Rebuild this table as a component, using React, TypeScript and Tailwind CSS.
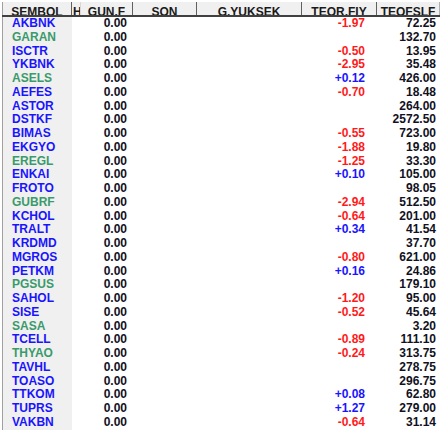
import React from "react";

type Row = { s: string; g?: boolean; f?: string; t: string };

const rows: Row[] = [
  { s: "AKBNK", f: "-1.97", t: "72.25" },
  { s: "GARAN", g: true, t: "132.70" },
  { s: "ISCTR", f: "-0.50", t: "13.95" },
  { s: "YKBNK", f: "-2.95", t: "35.48" },
  { s: "ASELS", g: true, f: "+0.12", t: "426.00" },
  { s: "AEFES", f: "-0.70", t: "18.48" },
  { s: "ASTOR", t: "264.00" },
  { s: "DSTKF", t: "2572.50" },
  { s: "BIMAS", f: "-0.55", t: "723.00" },
  { s: "EKGYO", f: "-1.88", t: "19.80" },
  { s: "EREGL", g: true, f: "-1.25", t: "33.30" },
  { s: "ENKAI", f: "+0.10", t: "105.00" },
  { s: "FROTO", t: "98.05" },
  { s: "GUBRF", g: true, f: "-2.94", t: "512.50" },
  { s: "KCHOL", f: "-0.64", t: "201.00" },
  { s: "TRALT", f: "+0.34", t: "41.54" },
  { s: "KRDMD", t: "37.70" },
  { s: "MGROS", f: "-0.80", t: "621.00" },
  { s: "PETKM", f: "+0.16", t: "24.86" },
  { s: "PGSUS", g: true, t: "179.10" },
  { s: "SAHOL", f: "-1.20", t: "95.00" },
  { s: "SISE", f: "-0.52", t: "45.64" },
  { s: "SASA", g: true, t: "3.20" },
  { s: "TCELL", f: "-0.89", t: "111.10" },
  { s: "THYAO", g: true, f: "-0.24", t: "313.75" },
  { s: "TAVHL", t: "278.75" },
  { s: "TOASO", t: "296.75" },
  { s: "TTKOM", f: "+0.08", t: "62.80" },
  { s: "TUPRS", f: "+1.27", t: "279.00" },
  { s: "VAKBN", f: "-0.64", t: "31.14" },
];

export default function App() {
  return (
    <div
      className="w-[442px] h-[431px] bg-white overflow-hidden text-[12px] font-bold"
      style={{ fontFamily: '"Liberation Sans", Arial, sans-serif' }}
    >
      {/* header */}
      <div className="mt-[2px] flex h-[13px] pl-[2px] text-[#1a1a1a]">
        <div className="w-[70px] border-l border-[#a0a0a0] border-r border-r-[#606060] bg-[#f0f0f0] overflow-hidden text-center leading-[12px] pt-[4px] whitespace-nowrap">
          SEMBOL
        </div>
        <div className="w-[9px] border-r border-[#d8d8d8] bg-[#f0f0f0] overflow-hidden leading-[12px] pt-[4px] pl-[1px] whitespace-nowrap">
          H
        </div>
        <div className="w-[52px] border-r border-[#606060] bg-[#f0f0f0] overflow-hidden text-center leading-[12px] pt-[4px]">
          GUN.F
        </div>
        <div className="w-[64px] border-r border-[#606060] bg-[#f0f0f0] overflow-hidden text-center leading-[12px] pt-[4px]">
          SON
        </div>
        <div className="w-[105px] border-r border-[#606060] bg-[#f0f0f0] overflow-hidden text-center leading-[12px] pt-[4px]">
          G.YUKSEK
        </div>
        <div className="w-[75px] border-r border-[#606060] bg-[#f0f0f0] overflow-hidden text-center leading-[12px] pt-[4px]">
          TEOR.FIY
        </div>
        <div className="w-[63px] border-r border-[#b0b0b0] bg-[#f0f0f0] overflow-hidden text-center leading-[12px] pt-[4px]">
          TEOFSLF
        </div>
      </div>
      <div className="ml-[2px] w-[438px] h-[2px] bg-[#404040]" />
      {/* body */}
      <div className="pl-[2px]">
        {rows.map((r) => (
          <div key={r.s} className="flex h-[13.75px] leading-[13.75px]">
            <div
              className={
                "w-[70px] border-l border-[#a0a0a0] bg-[#f0f0f0] pl-[9px] " +
                (r.g ? "text-[#3a9a6c]" : "text-[#1a14ff]")
              }
            >
              {r.s}
            </div>
            <div className="w-[9px]" />
            <div className="w-[52px] text-right pr-[6px] text-[#111122]">0.00</div>
            <div className="w-[64px]" />
            <div className="w-[105px]" />
            <div
              className={
                "w-[75px] text-right pr-[12px] " +
                (r.f && r.f.startsWith("+") ? "text-[#1a14ff]" : "text-[#ff1a1a]")
              }
            >
              {r.f ?? ""}
            </div>
            <div className="w-[63px] text-right pr-[4px] text-[#111122]">{r.t}</div>
          </div>
        ))}
      </div>
    </div>
  );
}
